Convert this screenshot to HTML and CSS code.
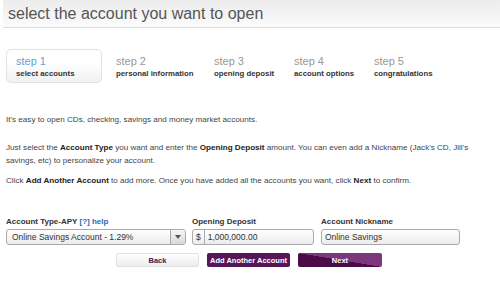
FILE: index.html
```html
<!DOCTYPE html>
<html lang="en">
<head>
    <meta charset="UTF-8">
    <meta name="viewport" content="width=device-width, initial-scale=1.0">
    <title>Open an Account</title>
    <link rel="stylesheet" href="styles.css">
</head>
<body>
    <div class="page-head">
        <h1>select the account you want to open</h1>
    </div>

    <ol class="steps">
        <li class="step current"><span class="step-num">step 1</span><span class="step-name">select accounts</span></li>
        <li class="step"><span class="step-num">step 2</span><span class="step-name">personal information</span></li>
        <li class="step"><span class="step-num">step 3</span><span class="step-name">opening deposit</span></li>
        <li class="step"><span class="step-num">step 4</span><span class="step-name">account options</span></li>
        <li class="step"><span class="step-num">step 5</span><span class="step-name">congratulations</span></li>
    </ol>

    <div class="intro">
        <p class="first">It's easy to open CDs, checking, savings and money market accounts.</p>
        <p class="second">Just select the <b>Account Type</b> you want and enter the <b>Opening Deposit</b> amount. You can even add a Nickname (Jack's CD, Jill's savings, etc) to personalize your account.</p>
        <p>Click <b>Add Another Account</b> to add more. Once you have added all the accounts you want, click <b>Next</b> to confirm.</p>
    </div>

    <form class="account-form">
        <div class="fields">
            <div class="field">
                <label for="type">Account Type-APY <a href="#" class="help">[?] help</a></label>
                <div class="select-box">
                    <select id="type">
                        <option>Online Savings Account - 1.29%</option>
                    </select>
                    <span class="select-btn"><span class="arrow"></span></span>
                </div>
            </div>
            <div class="field">
                <label for="deposit">Opening Deposit</label>
                <div class="text-box">
                    <span class="prefix">$</span>
                    <input type="text" id="deposit" value="1,000,000.00">
                </div>
            </div>
            <div class="field">
                <label for="nick">Account Nickname</label>
                <div class="text-box">
                    <input type="text" id="nick" value="Online Savings">
                </div>
            </div>
        </div>

        <div class="actions">
            <button type="button" class="btn btn-back">Back</button>
            <button type="button" class="btn btn-add">Add Another Account</button>
            <button type="button" class="btn btn-next">Next</button>
        </div>
    </form>
</body>
</html>
```

FILE: styles.css
```css
body {
    margin: 0;
    background-color: #fff;
    font-family: "Liberation Sans", Arial, sans-serif;
    color: #444;
}

.page-head {
    height: 27px;
    background: linear-gradient(#ececec, #fbfbfb);
    border-bottom: 1px solid #ddd;
    margin-left: 3px;
}

.page-head h1 {
    margin: 0;
    padding: 4px 0 0 5px;
    font-size: 16px;
    font-weight: normal;
    line-height: 20px;
    color: #555;
}

.steps {
    list-style: none;
    margin: 21px 0 0 6px;
    padding: 0;
    display: grid;
    grid-template-columns: 100px 98px 80px 80px auto;
}

.step {
    display: flex;
    flex-direction: column;
    padding: 6px 10px 0;
    height: 34px;
    box-sizing: border-box;
    white-space: nowrap;
}

.step.current {
    width: 96px;
    border: 1px solid #e2e2e2;
    border-radius: 5px;
    background: linear-gradient(#fff 40%, #f1f1f1);
    padding: 5px 9px 0;
}

.step-num {
    font-size: 11px;
    line-height: 13px;
    color: #999;
}

.current .step-num {
    color: #5fa2d6;
}

.step-name {
    font-size: 7.8px;
    font-weight: bold;
    line-height: 11px;
    color: #333;
}

.intro {
    margin: 30px 0 0 6px;
    width: 482px;
}

.intro p {
    font-size: 8.1px;
    line-height: 13px;
    margin: 0 0 15px;
}

.intro p.second {
    margin-bottom: 7px;
}

.intro b {
    color: #222;
}

.account-form {
    margin: 29px 0 0 6px;
}

.fields {
    display: flex;
    gap: 6px;
}

.field {
    display: flex;
    flex-direction: column;
}

.field:nth-child(1) {
    width: 180px;
}

.field:nth-child(2) {
    width: 122px;
}

.field:nth-child(3) {
    width: 139px;
    margin-left: 1px;
}

.field label {
    font-size: 8px;
    font-weight: bold;
    line-height: 12px;
    color: #333;
    margin-bottom: 1px;
}

.help {
    color: #1a6db4;
    text-decoration: none;
}

.select-box, .text-box {
    display: flex;
    height: 16px;
    box-sizing: border-box;
    border: 1px solid #aaa;
    border-radius: 3px;
    background: linear-gradient(#fff, #ececec);
    overflow: hidden;
}

select, input {
    flex: 1;
    min-width: 0;
    border: none;
    outline: none;
    background: transparent;
    font-family: "Liberation Sans", Arial, sans-serif;
    font-size: 8.5px;
    color: #333;
    padding: 0 4px;
}

select {
    appearance: none;
    -webkit-appearance: none;
    padding-left: 5px;
}

.select-btn {
    width: 14px;
    border-left: 1px solid #aaa;
    background: linear-gradient(#f6f6f6, #d9d9d9);
    display: flex;
    align-items: center;
    justify-content: center;
}

.arrow {
    width: 0;
    height: 0;
    border-left: 3px solid transparent;
    border-right: 3px solid transparent;
    border-top: 4px solid #555;
}

.prefix {
    font-size: 8.5px;
    line-height: 14px;
    color: #333;
    padding: 0 3px;
    border-right: 1px solid #aaa;
}

.text-box input {
    padding-left: 3px;
}

.actions {
    display: flex;
    gap: 8px;
    margin: 8px 0 0 110px;
}

.btn {
    height: 14px;
    width: 83px;
    padding: 0;
    border-radius: 2px;
    font-family: "Liberation Sans", Arial, sans-serif;
    font-size: 7.5px;
    font-weight: bold;
    cursor: pointer;
}

.btn-back {
    border: 1px solid #e2e2e2;
    background: linear-gradient(#fff, #ececec);
    color: #4a1446;
}

.btn-add {
    border: none;
    background-color: #571656;
    color: #fff;
}

.btn-next {
    width: 84px;
    border: none;
    background: linear-gradient(to top right, #4c0a49 50%, #7c387a 50%);
    color: #fff;
}
```
